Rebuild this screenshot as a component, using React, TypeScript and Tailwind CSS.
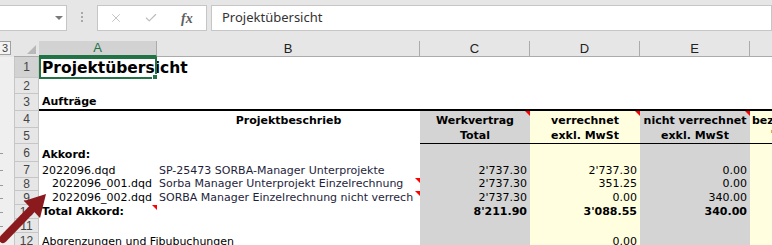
import { X, Check } from 'lucide-react';

type Cell = {
  t?: string;
  b?: boolean;
  a?: 'l' | 'r' | 'c';
  ind?: boolean;
  tri?: boolean;
  big?: boolean;
  tone?: string;
};

type Row = {
  n: number;
  h: string;
  cells: Cell[];
  thick?: boolean;
  thin?: boolean;
  sel?: boolean;
};

const widths = ['w-[118px]', 'w-[263px]', 'w-[110px]', 'w-[110px]', 'w-[110px]', 'w-[110px]'];
const letters = ['A', 'B', 'C', 'D', 'E', 'F'];

const rows: Row[] = [
  { n: 1, h: 'h-[21px]', sel: true, cells: [{ t: 'Projektübersicht', b: true, big: true }] },
  { n: 2, h: 'h-[16px]', cells: [] },
  { n: 3, h: 'h-[17px]', thick: true, cells: [{ t: 'Aufträge', b: true }] },
  {
    n: 4,
    h: 'h-[17px]',
    cells: [
      {},
      { t: 'Projektbeschrieb', b: true, a: 'c' },
      { t: 'Werkvertrag', b: true, a: 'c', tri: true },
      { t: 'verrechnet', b: true, a: 'c', tri: true },
      { t: 'nicht verrechnet', b: true, a: 'c', tri: true },
      { t: 'bezahlt', b: true },
    ],
  },
  {
    n: 5,
    h: 'h-[16px]',
    thin: true,
    cells: [
      {},
      {},
      { t: 'Total', b: true, a: 'c' },
      { t: 'exkl. MwSt', b: true, a: 'c' },
      { t: 'exkl. MwSt', b: true, a: 'c' },
      { t: '', tone: 'orange' },
    ],
  },
  { n: 6, h: 'h-[18px]', cells: [{ t: 'Akkord:', b: true }] },
  {
    n: 7,
    h: 'h-[16px]',
    cells: [
      { t: '2022096.dqd' },
      { t: 'SP-25473 SORBA-Manager Unterprojekte' },
      { t: "2'737.30", a: 'r' },
      { t: "2'737.30", a: 'r' },
      { t: '0.00', a: 'r' },
    ],
  },
  {
    n: 8,
    h: 'h-[13px]',
    cells: [
      { t: '2022096_001.dqd', ind: true },
      { t: 'Sorba Manager Unterprojekt Einzelrechnung', tri: true },
      { t: "2'737.30", a: 'r' },
      { t: '351.25', a: 'r' },
      { t: '0.00', a: 'r' },
    ],
  },
  {
    n: 9,
    h: 'h-[14px]',
    cells: [
      { t: '2022096_002.dqd', ind: true },
      { t: 'SORBA Manager Einzelrechnung nicht verrech', tri: true },
      { t: "2'737.30", a: 'r' },
      { t: '0.00', a: 'r' },
      { t: '340.00', a: 'r' },
    ],
  },
  {
    n: 10,
    h: 'h-[14px]',
    cells: [
      { t: 'Total Akkord:', b: true, tri: true },
      {},
      { t: "8'211.90", b: true, a: 'r' },
      { t: "3'088.55", b: true, a: 'r' },
      { t: '340.00', b: true, a: 'r' },
    ],
  },
  { n: 11, h: 'h-[14px]', cells: [] },
  {
    n: 12,
    h: 'h-[16px]',
    cells: [{ t: 'Abgrenzungen und Fibubuchungen' }, {}, {}, { t: '0.00', a: 'r' }],
  },
];

function bgFor(col: number, row: number) {
  if (row < 4) return 'bg-white';
  if (col === 2 || col === 4) return 'bg-[#d4d4d4]';
  if (col === 3 || col === 5) return 'bg-[#ffffe0]';
  return 'bg-white';
}

function DataCell({ cell, col, row }: { cell: Cell; col: number; row: Row }) {
  const align =
    cell.a === 'r'
      ? 'justify-end pr-[3px]'
      : cell.a === 'c'
        ? 'justify-center'
        : col === 0
          ? cell.ind
            ? 'pl-[13px]'
            : 'pl-[3px]'
          : 'pl-[2px]';
  const border = row.thick ? 'border-b-2 border-black' : row.thin && col >= 2 ? 'border-b border-black' : '';
  const clip = col === 0 ? 'overflow-visible z-10' : 'overflow-hidden';
  const weight = cell.b ? 'font-bold' : 'font-normal';
  const size = cell.big ? 'text-[15.5px] leading-[18px]' : 'text-[11px] leading-[13px]';
  const color = col === 1 && !cell.b ? 'text-[#1e1e3c]' : 'text-black';
  return (
    <div className={`${widths[col]} ${bgFor(col, row.n)} ${border} ${clip} ${align} relative flex shrink-0 items-end pb-[1px]`}>
      {cell.t ? <span className={`${weight} ${size} ${color} whitespace-nowrap`}>{cell.t}</span> : null}
      {cell.tone === 'orange' ? <span className="mb-[9px] ml-[19px] h-[3px] w-[1px] bg-[#f0a040]" /> : null}
      {cell.tri ? (
        <span className="absolute right-0 top-0 h-0 w-0 border-l-[5px] border-t-[5px] border-l-transparent border-t-[#ff0000]" />
      ) : null}
    </div>
  );
}

function FormulaBar() {
  return (
    <div className="flex h-[41px] bg-[#e6e6e6] pt-[5px]">
      <div className="relative -ml-px flex h-[26px] w-[68px] items-center border border-[#c6c6c6] bg-white">
        <span className="absolute left-[55px] top-[10px] h-0 w-0 border-x-[4px] border-t-[4px] border-x-transparent border-t-[#7a7a7a]" />
      </div>
      <div className="flex w-[30px] flex-col items-center gap-[2px] pt-[7px]">
        <span className="h-[2px] w-[2px] bg-[#a8a8a8]" />
        <span className="h-[2px] w-[2px] bg-[#a8a8a8]" />
        <span className="h-[2px] w-[2px] bg-[#a8a8a8]" />
      </div>
      <div className="flex h-[26px] w-[110px] items-center border border-[#c6c6c6] bg-white">
        <X className="ml-[11px] h-[14px] w-[14px] text-[#bcbcbc]" strokeWidth={1.5} />
        <Check className="ml-[21px] h-[14px] w-[14px] text-[#bcbcbc]" strokeWidth={2} />
        <span className="ml-[23px] font-['Liberation_Serif',serif] text-[14px] font-bold italic text-[#606060]">
          fx
        </span>
      </div>
      <div className="ml-[4px] flex h-[26px] flex-1 items-center border border-[#c6c6c6] bg-white pl-[10px]">
        <span className="font-['Noto_Sans',sans-serif] text-[13px] text-[#333333]">Projektübersicht</span>
      </div>
    </div>
  );
}

function ColumnHeaders() {
  return (
    <div className="flex h-[16px] bg-[#e6e6e6]">
      <div className="relative w-[14px] shrink-0">
        <span className="absolute -left-px top-0 flex h-[14px] w-[12px] items-center justify-center border border-[#a0a0a0] bg-[#f3f3f3] font-['Liberation_Sans',sans-serif] text-[11px] text-[#444444]">
          3
        </span>
      </div>
      <div className="relative w-[25px] shrink-0 border-b border-[#ababab]">
        <svg className="absolute bottom-[2px] right-[3px]" width="9" height="9" viewBox="0 0 9 9">
          <polygon points="9,0 9,9 0,9" fill="#b8b8b8" />
        </svg>
      </div>
      {letters.map((l, i) => (
        <div
          key={l}
          className={`${widths[i]} flex shrink-0 items-center justify-center border-r font-['Liberation_Sans',sans-serif] text-[13px] ${
            i === 0
              ? 'border-b-2 border-b-[#217346] border-r-[#ababab] bg-[#d2d2d2] text-[#217346]'
              : 'border-b border-b-[#ababab] border-r-[#ababab] text-[#222222]'
          }`}
        >
          {i < 5 ? l : ''}
        </div>
      ))}
    </div>
  );
}

export default function App() {
  return (
    <div className="relative h-[245px] w-[772px] overflow-hidden bg-white font-['DejaVu_Sans','Verdana',sans-serif]">
      <FormulaBar />
      <ColumnHeaders />
      <div className="flex flex-col">
        {rows.map((row) => (
          <div key={row.n} className={`flex ${row.h}`}>
            <div className="relative w-[14px] shrink-0 bg-[#efefef]">
              {row.n >= 6 ? <span className="absolute left-0 top-1/2 h-px w-[3px] bg-[#9a9a9a]" /> : null}
            </div>
            <div
              className={`flex w-[25px] shrink-0 items-center justify-center border-b border-l border-r border-[#c6c6c6] font-['Liberation_Sans',sans-serif] text-[12px] text-[#444444] ${
                row.sel ? 'bg-[#d2d2d2]' : 'bg-[#e6e6e6]'
              }`}
            >
              {row.n}
            </div>
            {widths.map((_, i) => (
              <DataCell key={i} cell={row.cells[i] ?? {}} col={i} row={row} />
            ))}
          </div>
        ))}
      </div>

      {/* selected cell A1 */}
      <div className="pointer-events-none absolute left-[39px] top-[57px] z-20 h-[22px] w-[118px] border-2 border-[#217346]">
        <span className="absolute -bottom-[3px] -right-[3px] h-[6px] w-[6px] border border-white bg-[#217346]" />
      </div>

      {/* annotation arrow */}
      <svg className="pointer-events-none absolute left-0 top-[188px] z-30" width="56" height="57" viewBox="0 0 56 57">
        <line x1="3" y1="51" x2="31" y2="22" stroke="#8b1a1f" strokeWidth="8" strokeLinecap="round" />
        <polygon points="46,6 24,13 40,30" fill="#8b1a1f" />
      </svg>
    </div>
  );
}
